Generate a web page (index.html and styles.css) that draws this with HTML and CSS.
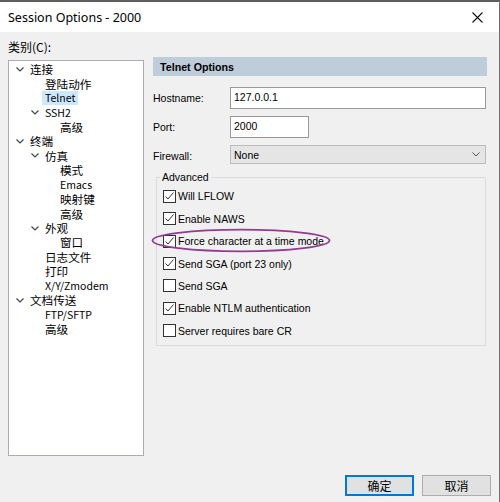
FILE: index.html
```html
<!DOCTYPE html>
<html>
<head>
<meta charset="utf-8">
<link rel="stylesheet" href="styles.css">
</head>
<body>
<div class="window">
  <div class="titlebar">
    <span class="title">Session Options - 2000</span>
    <svg class="close" width="11" height="11" viewBox="0 0 11 11"><path d="M0.5 0.5L10.5 10.5M10.5 0.5L0.5 10.5" stroke="#111" stroke-width="1.1" fill="none"/></svg>
  </div>
  <div class="client">
    <div class="main">
      <div class="left">
        <div class="cat-label">类别(C):</div>
        <div class="tree">
          <div class="node l0"><span class="twisty"><svg width="8" height="5" viewBox="0 0 8 5"><path d="M0.5 0.5L4 4L7.5 0.5" stroke="#444" stroke-width="1.2" fill="none"/></svg></span><span class="lbl">连接</span></div>
          <div class="node l1"><span class="twisty"></span><span class="lbl">登陆动作</span></div>
          <div class="node l1"><span class="twisty"></span><span class="lbl sel lat">Telnet</span></div>
          <div class="node l1"><span class="twisty"><svg width="8" height="5" viewBox="0 0 8 5"><path d="M0.5 0.5L4 4L7.5 0.5" stroke="#444" stroke-width="1.2" fill="none"/></svg></span><span class="lbl lat">SSH2</span></div>
          <div class="node l2"><span class="twisty"></span><span class="lbl">高级</span></div>
          <div class="node l0"><span class="twisty"><svg width="8" height="5" viewBox="0 0 8 5"><path d="M0.5 0.5L4 4L7.5 0.5" stroke="#444" stroke-width="1.2" fill="none"/></svg></span><span class="lbl">终端</span></div>
          <div class="node l1"><span class="twisty"><svg width="8" height="5" viewBox="0 0 8 5"><path d="M0.5 0.5L4 4L7.5 0.5" stroke="#444" stroke-width="1.2" fill="none"/></svg></span><span class="lbl">仿真</span></div>
          <div class="node l2"><span class="twisty"></span><span class="lbl">模式</span></div>
          <div class="node l2"><span class="twisty"></span><span class="lbl lat">Emacs</span></div>
          <div class="node l2"><span class="twisty"></span><span class="lbl">映射键</span></div>
          <div class="node l2"><span class="twisty"></span><span class="lbl">高级</span></div>
          <div class="node l1"><span class="twisty"><svg width="8" height="5" viewBox="0 0 8 5"><path d="M0.5 0.5L4 4L7.5 0.5" stroke="#444" stroke-width="1.2" fill="none"/></svg></span><span class="lbl">外观</span></div>
          <div class="node l2"><span class="twisty"></span><span class="lbl">窗口</span></div>
          <div class="node l1"><span class="twisty"></span><span class="lbl">日志文件</span></div>
          <div class="node l1"><span class="twisty"></span><span class="lbl">打印</span></div>
          <div class="node l1"><span class="twisty"></span><span class="lbl lat">X/Y/Zmodem</span></div>
          <div class="node l0"><span class="twisty"><svg width="8" height="5" viewBox="0 0 8 5"><path d="M0.5 0.5L4 4L7.5 0.5" stroke="#444" stroke-width="1.2" fill="none"/></svg></span><span class="lbl">文档传送</span></div>
          <div class="node l1"><span class="twisty"></span><span class="lbl lat">FTP/SFTP</span></div>
          <div class="node l1"><span class="twisty"></span><span class="lbl">高级</span></div>
        </div>
      </div>
      <div class="right">
        <div class="header">Telnet Options</div>
        <div class="form">
          <span class="flabel">Hostname:</span>
          <div class="input">127.0.0.1</div>
          <span class="flabel">Port:</span>
          <div class="input port">2000</div>
          <span class="flabel firewall">Firewall:</span>
          <div class="select"><span>None</span><svg width="8" height="5" viewBox="0 0 8 5"><path d="M0.5 0.5L4 4L7.5 0.5" stroke="#555" stroke-width="1" fill="none"/></svg></div>
        </div>
        <fieldset class="group">
          <legend>Advanced</legend>
          <div class="cb-row"><span class="box"><svg width="11" height="11" viewBox="0 0 11 11"><path d="M1.5 5.5L4 8L9.5 1.5" stroke="#333" stroke-width="1" fill="none"/></svg></span><span>Will LFLOW</span></div>
          <div class="cb-row"><span class="box"><svg width="11" height="11" viewBox="0 0 11 11"><path d="M1.5 5.5L4 8L9.5 1.5" stroke="#333" stroke-width="1" fill="none"/></svg></span><span>Enable NAWS</span></div>
          <div class="cb-row force"><span class="box"><svg width="11" height="11" viewBox="0 0 11 11"><path d="M1.5 5.5L4 8L9.5 1.5" stroke="#333" stroke-width="1" fill="none"/></svg></span><span>Force character at a time mode</span>
            <svg class="ellipse" width="182" height="26" viewBox="0 0 182 26"><ellipse cx="90" cy="12.5" rx="88.5" ry="10.8" stroke="#923c91" stroke-width="1.8" fill="none"/></svg>
          </div>
          <div class="cb-row"><span class="box"><svg width="11" height="11" viewBox="0 0 11 11"><path d="M1.5 5.5L4 8L9.5 1.5" stroke="#333" stroke-width="1" fill="none"/></svg></span><span>Send SGA (port 23 only)</span></div>
          <div class="cb-row"><span class="box"></span><span>Send SGA</span></div>
          <div class="cb-row"><span class="box"><svg width="11" height="11" viewBox="0 0 11 11"><path d="M1.5 5.5L4 8L9.5 1.5" stroke="#333" stroke-width="1" fill="none"/></svg></span><span>Enable NTLM authentication</span></div>
          <div class="cb-row"><span class="box"></span><span>Server requires bare CR</span></div>
        </fieldset>
      </div>
    </div>
    <div class="buttons">
      <div class="btn default">确定</div>
      <div class="btn">取消</div>
    </div>
  </div>
</div>
</body>
</html>
```
FILE: styles.css
```css
* { box-sizing: border-box; }
html, body { margin: 0; padding: 0; }
body {
  width: 500px;
  height: 502px;
  overflow: hidden;
  background: #f0f0f0;
  font-family: "Liberation Sans", "Noto Sans CJK SC", sans-serif;
  font-size: 10.5px;
  color: #000;
}
.window {
  width: 500px;
  height: 502px;
  display: flex;
  flex-direction: column;
  border-top: 2px solid #5f5f5f;
  border-right: 1px solid #707070;
  background: #f0f0f0;
}
.titlebar {
  height: 30px;
  flex: none;
  background: #fff;
  display: flex;
  align-items: center;
  justify-content: space-between;
  padding: 0 16px 0 8px;
}
.title {
  font-family: "Noto Sans", sans-serif;
  font-size: 12.5px;
}
.close { display: block; }
.client {
  flex: 1;
  display: flex;
  flex-direction: column;
}
.main {
  display: flex;
  padding-left: 8px;
  gap: 9px;
}
.left {
  width: 136px;
  flex: none;
  padding-top: 6px;
}
.cat-label {
  font-family: "Noto Sans CJK SC", sans-serif;
  font-size: 12px;
  line-height: 18px;
  margin-bottom: 4px;
}
.tree {
  height: 396px;
  background: #fff;
  border: 1px solid #abadb3;
  padding-top: 1px;
  font-family: "Noto Sans CJK SC", sans-serif;
  font-size: 11.6px;
}
.node {
  height: 14.45px;
  display: flex;
  align-items: center;
}
.l0 { padding-left: 4px; }
.l1 { padding-left: 19px; }
.l2 { padding-left: 34px; }
.twisty {
  width: 14px;
  flex: none;
  display: flex;
  justify-content: center;
  align-items: center;
}
.twisty svg { display: block; }
.lbl {
  padding: 0 3px;
  height: 14px;
  line-height: 14px;
  white-space: nowrap;
}
.lat { font-size: 10.5px; }
.sel { background: #cce8ff; }
.right {
  flex: 1;
  padding-top: 25px;
  padding-right: 12px;
}
.header {
  height: 19px;
  background: #bfcddb;
  font-weight: bold;
  font-size: 10.7px;
  padding-left: 7px;
  display: flex;
  align-items: center;
}
.form {
  display: grid;
  grid-template-columns: 77px 1fr;
  row-gap: 7px;
  margin-top: 11px;
  align-items: center;
  padding-right: 1px;
}
.input {
  height: 22px;
  background: #fff;
  border: 1px solid #999;
  padding: 0 0 2px 3px;
  display: flex;
  align-items: center;
}
.port { width: 79px; }
.firewall { padding-top: 3px; }
.select {
  height: 19px;
  background: #e5e5e5;
  border: 1px solid #bcbcbc;
  display: flex;
  align-items: center;
  justify-content: space-between;
  padding: 0 5px 0 3px;
}
.select svg { display: block; }
.group {
  margin: 5px 1px 0 3px;
  padding: 0 6px 3px 6px;
  border: 1px solid #dcdcdc;
  min-width: 0;
}
.group legend {
  padding: 0 2px;
  margin-left: -3px;
  line-height: 16px;
}
.cb-row {
  height: 22.45px;
  display: flex;
  align-items: center;
  gap: 2px;
  position: relative;
  white-space: nowrap;
}
.box {
  width: 13px;
  height: 13px;
  flex: none;
  border: 1px solid #333;
  background: #fff;
  display: block;
}
.box svg { display: block; }
.ellipse {
  position: absolute;
  left: -12px;
  top: -2px;
  pointer-events: none;
}
.buttons {
  margin-top: auto;
  display: flex;
  justify-content: flex-end;
  gap: 8px;
  padding: 0 8px 6px 0;
}
.btn {
  width: 69px;
  height: 21px;
  border: 1px solid #adadad;
  background: #e1e1e1;
  font-family: "Noto Sans CJK SC", sans-serif;
  font-size: 12px;
  display: flex;
  align-items: center;
  justify-content: center;
}
.btn.default {
  border-color: #0078d7;
  box-shadow: inset 0 0 0 1px #0078d7;
}
```
